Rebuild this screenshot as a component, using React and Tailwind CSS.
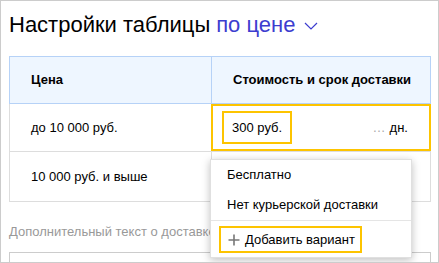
export default function App() {
  const font = { fontFamily: '"Liberation Sans", Arial, sans-serif' };
  return (
    <div
      className="relative w-[439px] h-[263px] overflow-hidden bg-white border border-[#cccccc] text-black"
      style={font}
    >
      <div className="pl-[8px] pr-[7px]">
        <h1 className="flex items-center h-[46px] pt-[1px] text-[22px] leading-none">
          <span>Настройки таблицы</span>
          <span className="ml-[6px] text-[#3d3dcf]">по цене</span>
          <svg className="ml-[9px] mt-[2px]" width="14" height="8" viewBox="0 0 14 8" fill="none">
            <path d="M1 1l6 6 6-6" stroke="#3d3dcf" strokeWidth="1.2" />
          </svg>
        </h1>

        <div className="mt-[9px] w-[422px] border border-[#dddddd] border-t-0 text-[13px]">
          <div className="grid grid-cols-[201px_1fr] h-[48px] bg-[#eef6ff] border border-[#b6d2f7] -mx-[1px] font-bold">
            <div className="flex items-center pl-[21px]">Цена</div>
            <div className="flex items-center pl-[21px] border-l border-[#b6d2f7]">
              Стоимость и срок доставки
            </div>
          </div>
          <div className="grid grid-cols-[201px_1fr] h-[48px] border-b border-[#dddddd]">
            <div className="flex items-center pl-[21px]">до 10 000 руб.</div>
            <div className="flex items-center justify-between border-2 border-[#fdc400] -mr-[1px] pl-[9px] pr-[21px]">
              <div className="flex items-center h-[33px] px-[8px] border-2 border-[#fdc400]">300 руб.</div>
              <div className="flex items-center">
                <span className="text-[#aaaaaa] tracking-[1px] mr-[3px]">…</span>
                <span>дн.</span>
              </div>
            </div>
          </div>
          <div className="grid grid-cols-[201px_1fr] h-[49px]">
            <div className="flex items-center pl-[21px]">10 000 руб. и выше</div>
            <div className="border-l border-[#dddddd]"></div>
          </div>
        </div>

        <p className="mt-[20px] text-[13px] text-[#999999]">Дополнительный текст о доставке</p>
        <div className="mt-[10px] w-[422px] h-[30px] border border-[#cccccc]"></div>
      </div>

      <div className="absolute left-[209px] top-[158px] w-[202px] h-[99px] bg-white border border-[#e0e0e0] shadow-[0_2px_8px_rgba(0,0,0,0.25)] text-[13px]">
        <div className="flex items-center h-[29px] pl-[16px]">Бесплатно</div>
        <div className="flex items-center h-[31px] pl-[16px]">Нет курьерской доставки</div>
        <div className="border-t border-[#e5e5e5] pt-[5px] pl-[8px]">
          <div className="inline-flex items-center h-[27px] w-[143px] pl-[7px] border-2 border-[#fdc400]">
            <svg width="12" height="12" viewBox="0 0 12 12" className="mr-[5px]">
              <path d="M6 0.5v11M0.5 6h11" stroke="#777777" strokeWidth="1.6" />
            </svg>
            <span>Добавить вариант</span>
          </div>
        </div>
      </div>
    </div>
  );
}
